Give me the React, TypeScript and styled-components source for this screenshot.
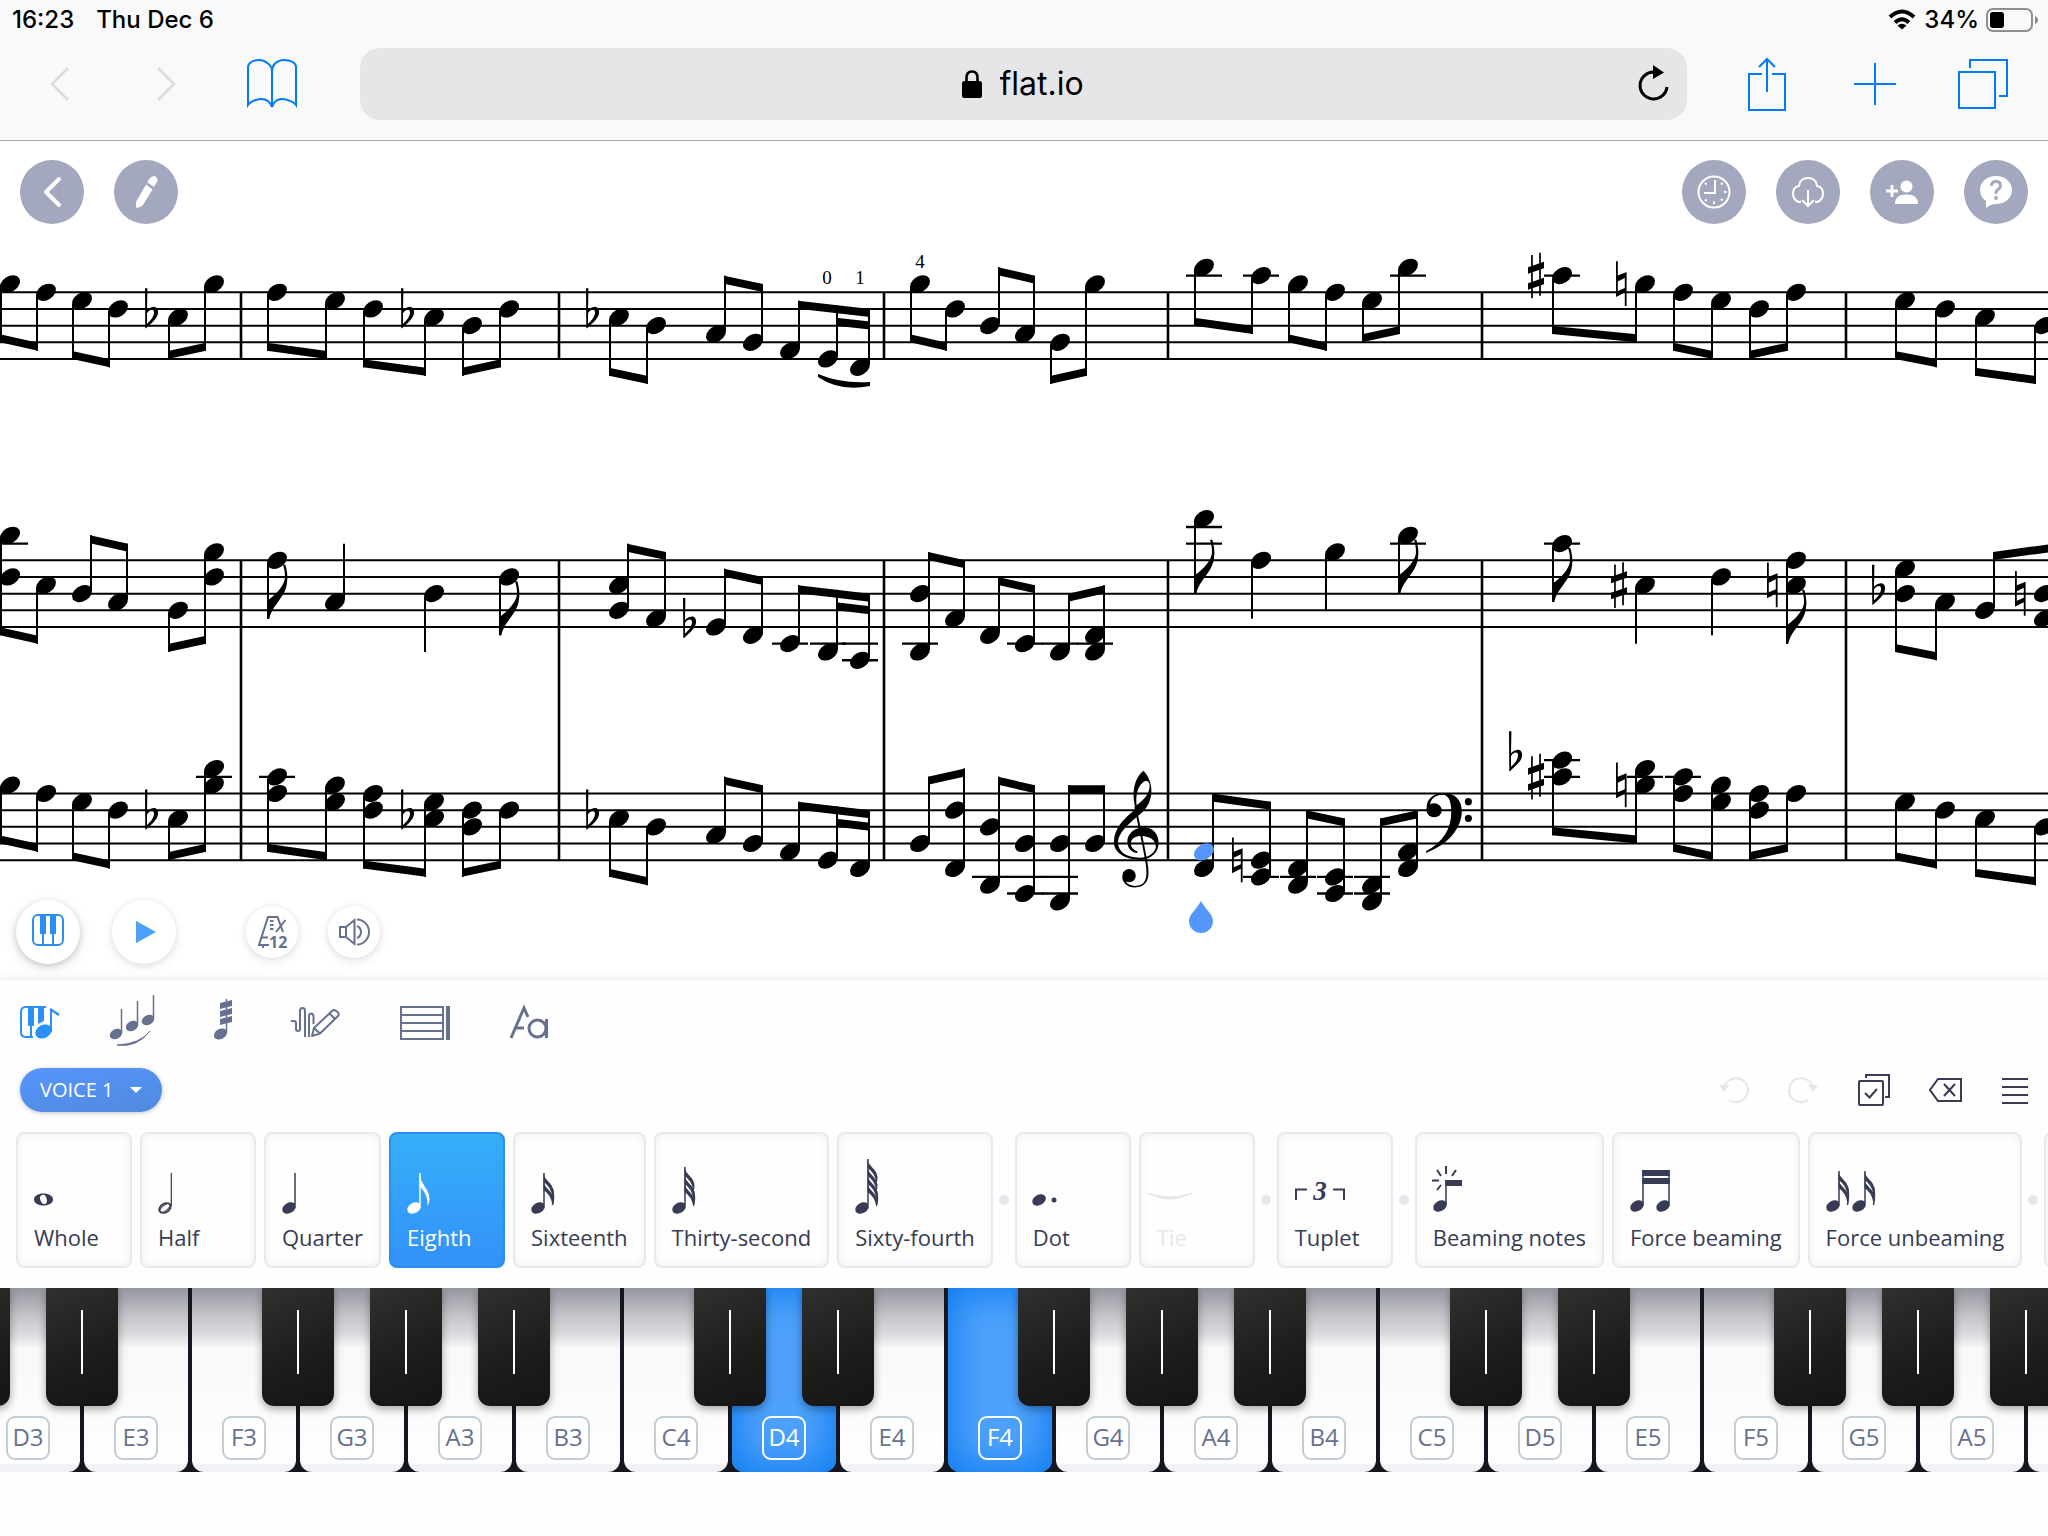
import React from "react";
import styled, { createGlobalStyle, css } from "styled-components";

const ink = "#373b53";
const slate = "#66718f";
const blue = "#2a90f5";

const GlobalStyle = createGlobalStyle`
  * { box-sizing: border-box; }
  body { margin: 0; background: #fefefe; overflow-x: hidden; }
  button, input { font: inherit; color: inherit; }
  button { border: 0; padding: 0; background: none; cursor: pointer; }
  svg { display: block; }
`;

const Page = styled.div`
  display: flex;
  flex-direction: column;
  min-height: 100vh;
  overflow: hidden;
  font-family: "Open Sans", "Noto Sans", sans-serif;
  color: ${ink};
`;

/* ---------- Browser chrome ---------- */

const Chrome = styled.header`
  background: #f9f9f9;
  border-bottom: 1px solid #a9a9ab;
  color: #000;
  font-family: Inter, "Liberation Sans", sans-serif;
`;

const StatusBar = styled.div`
  display: flex;
  align-items: center;
  justify-content: space-between;
  height: 40px;
  padding: 0 8px 0 12px;
  font-size: 24px;
  font-weight: 500;
  line-height: 40px;
`;

const StatusSide = styled.div<{ $gap: number }>`
  display: flex;
  align-items: center;
  gap: ${(p) => p.$gap}px;
`;

const NavBar = styled.nav`
  display: flex;
  align-items: center;
  height: 100px;
  padding: 0 11px 12px 7px;
`;

const NavButton = styled.button<{ $muted?: boolean; $wide?: boolean }>`
  display: flex;
  align-items: center;
  justify-content: center;
  width: ${(p) => (p.$wide ? 108 : 106)}px;
  height: 72px;
  color: ${(p) => (p.$muted ? "#dcdcde" : "#007aff")};
`;

const AddressBar = styled.div`
  position: relative;
  flex: 1;
  display: flex;
  align-items: center;
  justify-content: center;
  gap: 18px;
  height: 72px;
  margin: 0 26px 0 35px;
  border-radius: 20px;
  background: #e6e6e8;
`;

const AddressInput = styled.input`
  width: 86px;
  height: 44px;
  padding: 0;
  border: 0;
  outline: 0;
  background: transparent;
  font-size: 32px;
  line-height: 44px;
`;

const ReloadButton = styled.button`
  position: absolute;
  right: 16px;
  top: 16px;
`;

/* ---------- Score ---------- */

const ScoreArea = styled.main`
  position: relative;
  height: 839px;
  background: #fff;
`;

const ScoreSvg = styled.svg`
  width: 100%;
  height: 839px;
`;

const TopActions = styled.div`
  position: absolute;
  top: 19px;
  left: 20px;
  right: 20px;
  display: flex;
  justify-content: space-between;
`;

const ActionGroup = styled.div`
  display: flex;
  gap: 30px;
`;

const RoundButton = styled.button`
  display: flex;
  align-items: center;
  justify-content: center;
  width: 64px;
  height: 64px;
  border-radius: 50%;
  background: #a3a8be;
  color: #fff;
`;

const PlayerControls = styled.div`
  position: absolute;
  left: 16px;
  bottom: 16px;
  display: flex;
  align-items: center;
  gap: 32px;
`;

const SmallControls = styled.div`
  display: flex;
  gap: 30px;
  margin-left: 38px;
`;

const FloatButton = styled.button<{ $size: number; $raised?: boolean }>`
  display: flex;
  align-items: center;
  justify-content: center;
  width: ${(p) => p.$size}px;
  height: ${(p) => p.$size}px;
  border-radius: 50%;
  background: #fff;
  color: ${slate};
  box-shadow: ${(p) =>
    p.$raised
      ? "0 2px 6px rgba(55, 59, 83, 0.24), 0 4px 14px rgba(55, 59, 83, 0.1)"
      : "0 1px 6px rgba(55, 59, 83, 0.12), 0 4px 12px rgba(55, 59, 83, 0.07)"};
  svg { overflow: visible; }
`;

/* ---------- Tool panel ---------- */

const Panel = styled.section`
  position: relative;
  padding: 14px 0 20px;
  background: #fefefe;
  box-shadow: 0 -1px 6px rgba(55, 59, 83, 0.12);
`;

const TabRow = styled.div`
  display: flex;
  gap: 50px;
  padding-left: 20px;
`;

const Tab = styled.button<{ $active?: boolean }>`
  color: ${(p) => (p.$active ? blue : slate)};
`;

const VoiceRow = styled.div`
  display: flex;
  align-items: center;
  justify-content: space-between;
  margin-top: 18px;
  padding: 0 15px 0 20px;
`;

const VoiceButton = styled.button`
  display: flex;
  align-items: center;
  justify-content: space-between;
  width: 142px;
  height: 44px;
  padding: 0 20px;
  border-radius: 22px;
  background: linear-gradient(170deg, #5596fd, #5189dc);
  box-shadow: 0 1px 4px rgba(55, 59, 83, 0.3);
  color: #fff;
  font-size: 20px;
  line-height: 44px;
  white-space: nowrap;
`;

const EditActions = styled.div`
  display: flex;
  gap: 34px;
`;

const EditButton = styled.button`
  display: flex;
  justify-content: center;
  width: 36px;
  &:disabled { color: #e6e6ea; }
`;

const ToolRow = styled.div`
  display: flex;
  align-items: center;
  gap: 22px;
  margin-top: 20px;
  padding-left: 16px;
  overflow: hidden;
`;

const ToolGroup = styled.div`
  position: relative;
  flex: none;
  display: flex;
  gap: 8px;
  & + &::before {
    content: "";
    position: absolute;
    left: -16px;
    top: 63px;
    width: 10px;
    height: 10px;
    border-radius: 50%;
    background: #e6e7ec;
  }
`;

const ToolCard = styled.button<{ $active?: boolean }>`
  display: flex;
  flex-direction: column;
  justify-content: flex-end;
  align-items: flex-start;
  gap: 6px;
  flex: none;
  min-width: 116px;
  height: 136px;
  padding: 0 16px 14px;
  border: 2px solid #e6eaee;
  border-radius: 8px;
  background: #fefefe;
  box-shadow: inset 0 0 8px rgba(55, 59, 83, 0.07);
  font-size: 22px;
  line-height: 30px;
  white-space: nowrap;
  ${(p) =>
    p.$active &&
    css`
      border-color: #2a8ff4;
      background: linear-gradient(#35aff9, #3391f8);
      box-shadow: none;
      color: #fff;
    `}
  &:disabled { color: #e6e6ea; }
  svg { overflow: visible; }
`;

/* ---------- Piano ---------- */

const Piano = styled.section`
  display: flex;
  height: 184px;
  overflow: hidden;
  background: #151720;
`;

const KeySlot = styled.div`
  position: relative;
  flex: none;
  width: 108px;
  &:first-child { margin-left: -26px; }
`;

const WhiteKey = styled.button<{ $pressed?: boolean }>`
  display: flex;
  align-items: flex-end;
  justify-content: center;
  width: 104px;
  height: 184px;
  margin-left: 2px;
  padding-bottom: 12px;
  border-radius: 0 0 12px 12px;
  background: ${(p) =>
    p.$pressed
      ? "#4ea2fb"
      : "linear-gradient(#96989f 0, #c4c4ca 28px, #dadade 46px, #f8f8f8 60px, #fefefe 175px, #f2f2f6 177px)"};
  box-shadow: ${(p) => (p.$pressed ? "inset 0 0 36px 6px #0f7cf0" : "none")};
  color: ${(p) => (p.$pressed ? "#fff" : slate)};
`;

const KeyLabel = styled.span<{ $pressed?: boolean }>`
  width: 44px;
  height: 44px;
  border: 2px solid ${(p) => (p.$pressed ? "#fff" : "#c2cdd4")};
  border-radius: 9px;
  background: ${(p) => (p.$pressed ? "transparent" : "#fff")};
  font-size: 24px;
  line-height: 38px;
  text-align: center;
`;

const BlackKey = styled.button`
  position: absolute;
  z-index: 1;
  top: 0;
  left: -36px;
  display: flex;
  justify-content: center;
  width: 72px;
  height: 118px;
  padding-top: 22px;
  border-radius: 0 0 12px 12px;
  background: linear-gradient(155deg, #303030, #1c1c1b 60%, #151515);
  box-shadow: 0 3px 8px rgba(0, 0, 0, 0.35);
  &::after {
    content: "";
    width: 2px;
    height: 64px;
    background: #fff;
  }
`;

/* ---------- Score data ---------- */

// Pitches are counted in half staff spaces, downward from the top line.
type Accidental = "flat" | "sharp" | "natural";
type Note = {
  x: number;
  p: number[];
  ledger?: number[];
  acc?: [Accidental, number, number?][];
};
type Group = {
  notes: Note[];
  dir: "up" | "down";
  beam?: [number, number];
  end?: number;
  flag?: boolean;
  inner?: boolean;
};

const STEP = 25 / 3;
const STAFFS = [292.3, 560.3, 793.5];

const n = (
  x: number,
  p: number | number[],
  ledger?: number[],
  acc?: Note["acc"]
): Note => ({ x, p: Array.isArray(p) ? p : [p], ledger, acc });
const down = (a: number, b: number, ...notes: Note[]): Group => ({ notes, dir: "down", beam: [a, b] });
const up = (a: number, b: number, ...notes: Note[]): Group => ({ notes, dir: "up", beam: [a, b] });
const single = (dir: "up" | "down", end: number, note: Note, flag = false): Group => ({
  notes: [note], dir, end, flag,
});
const flat = (p: number, dx = -33): [Accidental, number, number] => ["flat", p, dx];
const sharp = (p: number): [Accidental, number, number] => ["sharp", p, -26];
const natural = (p: number): [Accidental, number, number] => ["natural", p, -29];

const SCORE: Group[][] = [
  [
    down(6, 7, n(10, -1), n(46, 0)),
    down(8, 9, n(82, 1), n(118, 2)),
    down(8, 7, n(178, 3, [], [flat(3)]), n(214, -1)),
    down(7, 8, n(277, 0), n(335, 1)),
    down(9, 10, n(373, 2), n(434, 3, [], [flat(3)])),
    down(10, 9, n(472, 4), n(509, 2)),
    down(10, 11, n(619, 3, [], [flat(3)]), n(656, 4)),
    up(-2, -1, n(716, 5), n(753, 6)),
    { ...up(1, 2, n(790, 7), n(828, 8), n(860, 9)), inner: true },
    down(6, 7, n(920, -1), n(955, 2)),
    up(-3, -2, n(990, 4), n(1025, 5)),
    down(11, 10, n(1060, 6), n(1095, -1)),
    down(4, 5, n(1204, -3, [-2]), n(1261, -2, [-2])),
    down(6, 7, n(1298, -1), n(1335, 0)),
    down(6, 5, n(1372, 1), n(1408, -3, [-2])),
    down(5, 6, n(1562, -2, [-2], [sharp(-2)]), n(1645, -1, [], [natural(-1)])),
    down(7, 8, n(1683, 0), n(1721, 1)),
    down(8, 7, n(1759, 2), n(1796, 0)),
    down(8, 9, n(1905, 1), n(1945, 2)),
    down(10, 11, n(1985, 3), n(2044, 4)),
  ],
  [
    down(9, 10, n(10, [-3, 2], [-2]), n(46, 3)),
    up(-3, -2, n(82, 4), n(118, 5)),
    down(11, 10, n(178, 6), n(214, [-1, 2])),
    single("down", 7, n(277, 0), true),
    single("up", -2, n(335, 5)),
    single("down", 11, n(434, 4)),
    single("down", 9, n(509, 2), true),
    up(-2, -1, n(619, [3, 6]), n(656, 7)),
    up(1, 2, n(716, 8, [], [flat(8)]), n(753, 9)),
    { ...up(3, 4, n(790, 10, [10]), n(828, 11, [10]), n(860, 12, [10, 12])), inner: true },
    up(-1, 0, n(920, [4, 11], [10]), n(955, 7)),
    up(2, 3, n(990, 9), n(1025, 10, [10])),
    up(4, 3, n(1060, 11, [10]), n(1095, [9, 11], [10])),
    single("down", 4, n(1204, -5, [-4, -2]), true),
    single("down", 7, n(1261, 0)),
    single("down", 6, n(1335, -1)),
    single("down", 4, n(1408, -3, [-2]), true),
    single("down", 5, n(1562, -2, [-2]), true),
    single("down", 10, n(1645, 3, [], [sharp(3)])),
    single("down", 9, n(1721, 2)),
    single("down", 10, n(1796, [0, 3], [], [natural(3)]), true),
    down(11, 12, n(1905, [1, 4], [], [flat(4)]), n(1945, 5)),
    up(-1, -2, n(1985, 6), n(2044, [4, 7], [], [natural(4)])),
  ],
  [
    down(6, 7, n(10, -1), n(46, 0)),
    down(8, 9, n(82, 1), n(118, 2)),
    down(8, 7, n(178, 3, [], [flat(3)]), n(214, [-3, -1], [-2])),
    down(7, 8, n(277, [-2, 0], [-2]), n(335, [-1, 1])),
    down(9, 10, n(373, [0, 2]), n(434, [1, 3], [], [flat(3)])),
    down(10, 9, n(472, [2, 4]), n(509, 2)),
    down(10, 11, n(619, 3, [], [flat(3)]), n(656, 4)),
    up(-2, -1, n(716, 5), n(753, 6)),
    { ...up(1, 2, n(790, 7), n(828, 8), n(860, 9)), inner: true },
    up(-2, -3, n(920, 6), n(955, [2, 9])),
    up(-2, -1, n(990, [4, 11], [10]), n(1025, [6, 12], [10, 12])),
    up(-1, -1, n(1060, [6, 13], [10, 12]), n(1095, 6)),
    up(0, 1, n(1204, [7, 9]), n(1261, [8, 10], [10], [natural(8)])),
    up(2, 3, n(1298, [9, 11], [10]), n(1335, [10, 12], [10, 12])),
    up(3, 2, n(1372, [11, 13], [10, 12]), n(1408, [7, 9])),
    down(5, 6, n(1562, [-4, -2], [-4, -2], [flat(-4, -53), sharp(-2)]), n(1645, [-3, -1], [-2], [natural(-1)])),
    down(7, 8, n(1683, [-2, 0], [-2]), n(1721, [-1, 1])),
    down(8, 7, n(1759, [0, 2]), n(1796, 0)),
    down(8, 9, n(1905, 1), n(1945, 2)),
    down(10, 11, n(1985, 3), n(2044, 4)),
  ],
];

const BARLINES = [241, 559, 884, 1168, 1482, 1846];
const isSelected = (staff: number, x: number, p: number) => staff === 2 && x === 1204 && p === 7;

const ACCIDENTALS: Record<Accidental, string> = {
  flat: "M0 -29H2.4L2 -7C5 -10 8 -10.6 9.6 -10.4C12.4 -10 13.5 -7 13 -4C12 2 6 6 1 11L0.3 11ZM2 -4V6.5C6 3 9 -1 9 -5C9 -9 4 -8 2 -4Z",
  sharp:
    "M-4.9 -20.7H-3.2V22.7H-4.9ZM3.2 -23H4.9V20H3.2ZM-8 -8.5L8 -14V-7.5L-8 -2ZM-8 7.5L8 2V8.5L-8 14Z",
  natural:
    "M0 -22.7H1.8V-8.5L10.6 -12V22H8.8V8.5L0 13ZM1.8 -2.5V7L8.8 4V-6Z",
};

function StaffGroup({ group, staff }: { group: Group; staff: number }) {
  const top = STAFFS[staff];
  const y = (p: number) => top + p * STEP;
  const side = group.dir === "down" ? -9 : 9;
  const first = group.notes[0].x + side;
  const last = group.notes[group.notes.length - 1].x + side;
  const beamAt = (x: number) => {
    if (!group.beam) return y(group.end ?? 0);
    const t = last === first ? 0 : (x - first) / (last - first);
    return y(group.beam[0] + (group.beam[1] - group.beam[0]) * t);
  };
  const thick = group.dir === "down" ? -8 : 8;
  const beamPath = (x0: number, x1: number, shift: number) => {
    const a = beamAt(x0) + shift;
    const b = beamAt(x1) + shift;
    return `M${x0 - 1} ${a}L${x1 + 1} ${b}V${b + thick}L${x0 - 1} ${a + thick}Z`;
  };
  return (
    <g>
      {group.notes.map((note) => {
        const sx = note.x + side;
        const start = group.dir === "down" ? Math.min(...note.p) : Math.max(...note.p);
        return (
          <g key={note.x}>
            {note.ledger?.map((p) => (
              <path key={p} d={`M${note.x - 18} ${y(p)}h36`} stroke="#000" strokeWidth="2.4" />
            ))}
            <path
              d={`M${sx} ${y(start) + (group.dir === "down" ? 3 : -3)}V${beamAt(sx)}`}
              stroke="#000"
              strokeWidth="2"
            />
            {note.p.map((p) => (
              <ellipse
                key={p}
                rx="10.8"
                ry="7.6"
                fill={isSelected(staff, note.x, p) ? "#5596fd" : "#000"}
                transform={`translate(${note.x} ${y(p)}) rotate(-32)`}
              />
            ))}
            {note.acc?.map(([kind, p, dx]) => (
              <path
                key={kind}
                fillRule={kind === "sharp" ? "nonzero" : "evenodd"}
                transform={`translate(${note.x + (dx ?? 0)} ${y(p)})`}
                d={ACCIDENTALS[kind]}
              />
            ))}
            {group.flag && (
              <path
                transform={`translate(${sx} ${beamAt(sx)})`}
                d="M-1 0V-18C4 -21 17 -32 17 -42C17 -47 16 -51 15 -54H17.4C19 -48 20 -42 19 -36C17.5 -21 4 -14 1.4 0Z"
              />
            )}
          </g>
        );
      })}
      {group.beam && <path d={beamPath(first, last, 0)} />}
      {group.inner && <path d={beamPath(group.notes[1].x + side, last, 12.5)} />}
    </g>
  );
}

function TrebleClef() {
  return (
    <g transform="translate(680 740) scale(0.4464 0.3333)">
      <path
        fillRule="evenodd"
        d="M1038 92C1023 108 1016 135 1016 165C1016 185 1019 198 1021 207C996 234 972 264 972 306C972 340 1000 360 1032 359C1057 357 1072 337 1072 308C1072 281 1058 262 1040 262C1018 262 1002 282 1002 305C1002 324 1012 338 1024 339L1025 334C1014 329 1009 318 1010 308C1011 296 1020 288 1034 288C1053 289 1066 300 1066 322C1062 343 1048 353 1030 353C1000 353 981 335 981 307C982 281 1000 257 1023 231C1042 211 1056 190 1056 152C1056 126 1048 105 1038 92ZM1023 196C1040 178 1053 160 1052 135C1051 121 1043 120 1036 128C1026 140 1020 165 1023 196Z"
      />
      <path
        d="M1020 200C1027 250 1038 310 1045 368C1051 412 1046 440 1019 440C1003 440 993 426 993 410"
        fill="none"
        stroke="#000"
        strokeWidth="4.5"
      />
      <ellipse cx="1006" cy="407" rx="15" ry="20" />
    </g>
  );
}

function BassClef() {
  return (
    <g transform="translate(1360 740) scale(0.4388 0.3333)">
      <ellipse cx="169" cy="211" rx="17.5" ry="21" />
      <path d="M152 208C150 180 165 159 191 159C220 160 232 184 232 214C232 265 200 315 150 339L151 333C190 305 208 266 208 215C208 184 202 164 188 164C170 164 158 180 160 200Z" />
      <ellipse cx="247" cy="185" rx="8" ry="11" />
      <ellipse cx="247" cy="235" rx="8" ry="11" />
    </g>
  );
}

function Score() {
  return (
    <ScoreSvg viewBox="0 141 2048 839" preserveAspectRatio="xMinYMin slice" role="img" aria-label="Score">
      {STAFFS.map((top) =>
        [0, 1, 2, 3, 4].map((i) => (
          <path key={`${top}-${i}`} d={`M0 ${top + i * 2 * STEP}H2048`} stroke="#000" strokeWidth="2" />
        ))
      )}
      {BARLINES.map((x) => (
        <path
          key={x}
          d={`M${x} ${STAFFS[0]}V${STAFFS[0] + 8 * STEP}M${x} ${STAFFS[1]}V${STAFFS[2] + 8 * STEP}`}
          stroke="#000"
          strokeWidth="2.6"
        />
      ))}
      {SCORE.map((groups, staff) => groups.map((g, i) => <StaffGroup key={`${staff}-${i}`} group={g} staff={staff} />))}
      <TrebleClef />
      <BassClef />
      <path d="M818 374Q842 384 870 382V386Q840 392 818 377Z" />
      <g fontFamily="Liberation Serif, serif" fontSize="19" textAnchor="middle">
        <text x="827" y="284">0</text>
        <text x="860" y="284">1</text>
        <text x="920" y="268">4</text>
      </g>
      <path d="M1201 901C1205 909 1213 914 1213 921A12 12 0 0 1 1189 921C1189 914 1197 909 1201 901Z" fill="#5596fd" />
    </ScoreSvg>
  );
}

/* ---------- Icons ---------- */

type IconProps = { w: number; h: number; sw?: number; children: React.ReactNode };
const Icon = ({ w, h, sw = 2, children }: IconProps) => (
  <svg width={w} height={h} viewBox={`0 0 ${w} ${h}`} fill="none" stroke="currentColor" strokeWidth={sw} aria-hidden="true">
    {children}
  </svg>
);

const Head = ({ x, y, rx = 7.2, ry = 5.2 }: { x: number; y: number; rx?: number; ry?: number }) => (
  <ellipse rx={rx} ry={ry} fill="currentColor" stroke="none" transform={`translate(${x} ${y}) rotate(-28)`} />
);

const Flags = ({ x, top, count }: { x: number; top: number; count: number }) => (
  <>
    {Array.from({ length: count }, (_, i) => (
      <path
        key={i}
        stroke="none"
        fill="currentColor"
        transform={`translate(${x} ${top + i * 8})`}
        d={
          count === 1
            ? "M0 0C1 12 10 16 10 26Q10 30 8 33Q9 22 0 13Z"
            : "M0 0C1 8 9 9 10 18Q10 22 9 24Q7 13 0 9Z"
        }
      />
    ))}
    {count > 1 && <path d={`M${x + 9} ${top + count * 8}Q${x + 11} ${top + count * 8 + 8} ${x + 9} 53`} strokeWidth="1.5" />}
  </>
);

const StemNote = ({ x = 0, top = 21, y = 56, flags = 0 }: { x?: number; top?: number; y?: number; flags?: number }) => (
  <>
    <Head x={x + 7} y={y} />
    <path d={`M${x + 13} ${y - 3}V${top}`} strokeWidth="1.5" />
    {flags > 0 && <Flags x={x + 12.5} top={top} count={flags} />}
  </>
);

const CardIcon = ({ w = 48, children }: { w?: number; children: React.ReactNode }) => (
  <Icon w={w} h={64}>{children}</Icon>
);

const ICONS: Record<string, React.ReactNode> = {
  Whole: (
    <path
      stroke="none"
      fill="currentColor"
      fillRule="evenodd"
      d="M9.5 41.5C15 41.5 19 44 19 47.5S15 53.5 9.5 53.5S0 51 0 47.5S4 41.5 9.5 41.5ZM8.5 43C5.5 43.5 5.5 46.5 7 49.5S11 52.5 12 51.5S13.5 47.5 12 45S10 42.8 8.5 43Z"
    />
  ),
  Half: (
    <>
      <ellipse rx="6.3" ry="4.3" transform="translate(7 56) rotate(-32)" strokeWidth="1.8" />
      <ellipse rx="6" ry="2.6" transform="translate(7 56) rotate(-38)" strokeWidth="1" />
      <path d="M13.3 54V21" strokeWidth="1.2" />
    </>
  ),
  Quarter: <StemNote />,
  Eighth: <StemNote flags={1} />,
  Sixteenth: <StemNote flags={2} />,
  "Thirty-second": <StemNote flags={3} top={15} />,
  "Sixty-fourth": <StemNote flags={4} top={7} />,
  Dot: (
    <>
      <Head x={6} y={48} />
      <circle cx="21" cy="48" r="2.5" fill="currentColor" stroke="none" />
    </>
  ),
  Tie: <path d="M-9 41Q13 53 35 41Q13 49 -9 41Z" fill="currentColor" strokeWidth="1" />,
  Tuplet: (
    <>
      <path d="M1 48V37.5H12M38 37.5H49V48" />
      <text x="25" y="48" textAnchor="middle" fontFamily="Liberation Serif, serif" fontSize="27" fontWeight="700" fontStyle="italic" fill="currentColor" stroke="none">3</text>
    </>
  ),
  "Beaming notes": (
    <>
      <Head x={7} y={54} />
      <path d="M13 52V28" strokeWidth="1.5" />
      <path d="M12.3 28H29V34H12.3Z" fill="currentColor" stroke="none" />
      <path d="M13 14V22M4 18L8 24M23 18L19 24M-1 28.5H6M8 33L4 38" />
    </>
  ),
  "Force beaming": (
    <>
      <Head x={7} y={54} />
      <Head x={33} y={54} />
      <path d="M13 52V18M39 52V18" strokeWidth="1.5" />
      <path d="M12.3 18H39.7V24H12.3ZM12.3 26H39.7V32H12.3Z" fill="currentColor" stroke="none" />
    </>
  ),
  "Force unbeaming": (
    <>
      <StemNote y={54} top={19} flags={2} />
      <StemNote x={26} y={54} top={19} flags={2} />
    </>
  ),
  More: null,
};

const TOOL_GROUPS = [
  ["Whole", "Half", "Quarter", "Eighth", "Sixteenth", "Thirty-second", "Sixty-fourth"],
  ["Dot", "Tie"],
  ["Tuplet"],
  ["Beaming notes", "Force beaming", "Force unbeaming"],
  ["More"],
];

const OCTAVE = ["C", "D", "E", "F", "G", "A", "B"];
const LAST_LABELLED = 18;
const KEYS = Array.from({ length: 20 }, (_, i) => {
  const index = i + 1;
  const name = OCTAVE[index % 7];
  return {
    name: `${name}${3 + Math.floor(index / 7)}`,
    black: name !== "C" && name !== "F",
    labelled: i <= LAST_LABELLED,
  };
});
const PRESSED = ["D4", "F4"];

const TABS: { label: string; w: number; art: React.ReactNode }[] = [
  {
    label: "Notes",
    w: 40,
    art: (
      <>
        <path d="M26 13H6Q1 13 1 18V38Q1 43 6 43H13M11 31V43M31 38V15" />
        <path d="M8 12H14V32H8ZM18 12H24V27L18 30Z" fill="currentColor" stroke="none" />
        <path d="M30 15L39 21" strokeWidth="2.5" />
        <Head x={23.5} y={37.5} rx={8.6} ry={6.6} />
      </>
    ),
  },
  {
    label: "Articulations",
    w: 48,
    art: (
      <>
        <Head x={6} y={40} rx={6.6} ry={4.8} />
        <Head x={22} y={32} rx={6.6} ry={4.8} />
        <Head x={38} y={26} rx={6.6} ry={4.8} />
        <path d="M11.5 38V15M27.5 30V7M43.5 24V1" strokeWidth="1.5" />
        <path d="M7 51Q27 54 40 37Q30 50 7 51Z" fill="currentColor" strokeWidth="1" />
      </>
    ),
  },
  {
    label: "Ornaments",
    w: 32,
    art: (
      <>
        <Head x={12.5} y={40} rx={7} ry={5} />
        <path d="M18.5 38V5" strokeWidth="1.5" />
        <path d="M12 9L24 6V12L12 15ZM12 17L24 14V20L12 23ZM12 25L24 22V28L12 31Z" fill="currentColor" stroke="none" />
      </>
    ),
  },
  {
    label: "Dynamics",
    w: 56,
    art: (
      <>
        <path d="M1 27H4Q6 27 6 29V35Q6 37 8 37T10 35V17Q10 14 12.5 14T15 17V43M19 43V22Q19 19.5 21 19.5T23.5 22V30" />
        <path d="M22 42L24 34L42 17Q44 15 47 17.5T48 22L30 39.5ZM39.5 19.5L45 25M24 34L30 39.5" strokeLinejoin="round" />
      </>
    ),
  },
  {
    label: "Measure",
    w: 58,
    art: (
      <>
        <path d="M5 13H47V45H5ZM5 21H47M5 29H47M5 37H47" />
        <path d="M52 12V46" strokeWidth="4" />
      </>
    ),
  },
  {
    label: "Text",
    w: 50,
    art: (
      <>
        <path d="M7 44L20 14L24 23M12 34H20" strokeWidth="3" />
        <circle cx="33.5" cy="34.5" r="8.5" strokeWidth="3" />
        <path d="M42.500 25V44" strokeWidth="3" />
      </>
    ),
  },
];

export default function App() {
  return (
    <Page>
      <GlobalStyle />
      <Chrome>
        <StatusBar>
          <StatusSide $gap={22}>
            <span>16:23</span>
            <span>Thu Dec 6</span>
          </StatusSide>
          <StatusSide $gap={7}>
            <Icon w={30} h={22} sw={4}>
              <path d="M3 8Q15 -3 27 8M8 13.5Q15 7 22 13.5" />
              <path d="M15 20.5L10.5 16.5Q15 13 19.5 16.5Z" fill="currentColor" stroke="none" />
            </Icon>
            <span>34%</span>
            <Icon w={54} h={24}>
              <rect x="1" y="1" width="45" height="22" rx="6" stroke="#8e8e90" />
              <rect x="4" y="4" width="14" height="16" rx="3" fill="#000" stroke="none" />
              <path d="M49 8Q52 9 52 12T49 16Z" fill="#8e8e90" stroke="none" />
            </Icon>
          </StatusSide>
        </StatusBar>
        <NavBar>
          <NavButton $muted aria-label="Back">
            <Icon w={22} h={36} sw={2.6}><path d="M19 2L3 18L19 34" /></Icon>
          </NavButton>
          <NavButton $muted aria-label="Forward">
            <Icon w={22} h={36} sw={2.6}><path d="M3 2L19 18L3 34" /></Icon>
          </NavButton>
          <NavButton aria-label="Bookmarks">
            <Icon w={52} h={50}>
              <path d="M26 48C24 42 20 40 15 40S4 43 2 46V8C2 4 7 1 13 1S26 6 26 12V48C28 42 31 40 36 40S48 43 50 46V8C50 4 45 1 38 1S26 6 26 12" />
            </Icon>
          </NavButton>
          <AddressBar>
            <Icon w={20} h={28}>
              <rect x="0" y="11" width="20" height="17" rx="2.5" fill="#000" stroke="none" />
              <path d="M4.5 12V8Q4.5 1.5 10 1.5T15.5 8V12" strokeWidth="2.6" />
            </Icon>
            <AddressInput aria-label="Address" defaultValue="flat.io" />
            <ReloadButton aria-label="Reload">
              <Icon w={36} h={40} sw={3}>
                <path d="M32 23A13.5 13.5 0 1 1 19 8" />
                <path d="M18 1L29 8.5L18 15Z" fill="#000" stroke="none" />
              </Icon>
            </ReloadButton>
          </AddressBar>
          <NavButton $wide aria-label="Share">
            <Icon w={40} h={54}>
              <path d="M15 17H2V53H38V17H25M20 35V2M12 10L20 2L28 10" />
            </Icon>
          </NavButton>
          <NavButton $wide aria-label="New tab">
            <Icon w={42} h={42}><path d="M21 0V42M0 21H42" /></Icon>
          </NavButton>
          <NavButton $wide aria-label="Tabs">
            <Icon w={50} h={50}>
              <path d="M1 13H37V49H1ZM12 9V1H49V37H41" />
            </Icon>
          </NavButton>
        </NavBar>
      </Chrome>

      <ScoreArea>
        <Score />
        <TopActions>
          <ActionGroup>
            <RoundButton aria-label="Back to scores">
              <Icon w={32} h={32} sw={4}><path d="M23 3L10 16L23 29" strokeLinecap="round" strokeLinejoin="round" /></Icon>
            </RoundButton>
            <RoundButton aria-label="Edit score">
              <Icon w={32} h={32}>
                <path d="M16 8.5L22.5 13.5L13 29Q10 32 6.500 32Q5 28 6.500 25Z" fill="currentColor" stroke="none" />
                <path d="M17.5 6.5Q20 0 24 0Q28 1 27.5 5L24 11Z" fill="currentColor" stroke="none" />
              </Icon>
            </RoundButton>
          </ActionGroup>
          <ActionGroup>
            <RoundButton aria-label="History">
              <Icon w={34} h={34}>
                <circle cx="17" cy="17" r="15.5" />
                <path d="M18 5V18H7" />
                <path d="M17 26.5V29M27 17H29.5M24 9.5L25.5 8M24 24L25.5 25.5M9.5 24.5L8 26M9.5 9.5L8 8" />
              </Icon>
            </RoundButton>
            <RoundButton aria-label="Export">
              <Icon w={34} h={34}>
                <path d="M10 27H8Q2 25 2 18.5T8 11Q9 3 17 3T26 11Q32 12 32 18.5T26 27H24" />
                <path d="M17 15V31M11 25L17 31L23 25" />
              </Icon>
            </RoundButton>
            <RoundButton aria-label="Share score">
              <Icon w={34} h={34}>
                <circle cx="21.5" cy="11.5" r="6" fill="currentColor" stroke="none" />
                <path d="M10 29Q10 19.5 21.5 19.5T33 29Z" fill="currentColor" stroke="none" />
                <path d="M1 16H13M7 10V22" strokeWidth="2.8" />
              </Icon>
            </RoundButton>
            <RoundButton aria-label="Help">
              <Icon w={34} h={34}>
                <path d="M17 1C26 1 33 7 33 15S26 29 17 29Q12 29 7 33V26Q1 22 1 15C1 7 8 1 17 1Z" fill="currentColor" stroke="none" />
                <path d="M12.5 11Q12.5 6.5 17 6.5T21.5 10.5Q21.5 13 19 14.5T17 19" stroke="#a3a8be" strokeWidth="2.8" />
                <circle cx="17" cy="23" r="2" fill="#a3a8be" stroke="none" />
              </Icon>
            </RoundButton>
          </ActionGroup>
        </TopActions>
        <PlayerControls>
          <FloatButton $size={64} $raised aria-label="Piano keyboard">
            <Icon w={32} h={36}>
              <g stroke={blue}>
                <rect x="1" y="1" width="30" height="30" rx="5" />
                <path d="M11 20V31M21 20V31" />
                <path d="M8 1H14V20H8ZM18 1H24V20H18Z" fill={blue} stroke="none" />
              </g>
            </Icon>
          </FloatButton>
          <FloatButton $size={64} aria-label="Play">
            <Icon w={20} h={22}><path d="M2 1Q2 -1 4 1L22 11L4 21Q2 23 2 21Z" fill="#4da1fb" stroke="none" /></Icon>
          </FloatButton>
          <SmallControls>
            <FloatButton $size={52} aria-label="Metronome">
              <Icon w={28} h={32}>
                <path d="M25 16L19.5 1H10L1 29H11M4 21.5H10M27.5 4L18 16M5 29V32" />
                <path d="M12 5H15.5M12 9H15.5M12 13H15.5" />
                <text x="11" y="32" fontFamily="Open Sans, sans-serif" fontSize="16" fontWeight="700" fill="currentColor" stroke="none">12</text>
              </Icon>
            </FloatButton>
            <FloatButton $size={52} aria-label="Volume">
              <Icon w={30} h={28}>
                <path d="M1 9H7V19H1ZM7 9L15.5 2V26L7 19M18 8A6.5 6.5 0 0 1 18 20M18 1.5A12 12.5 0 0 1 18 26.5" />
              </Icon>
            </FloatButton>
          </SmallControls>
        </PlayerControls>
      </ScoreArea>

      <Panel>
        <TabRow>
          {TABS.map((tab, i) => (
            <Tab key={tab.label} $active={i === 0} aria-label={tab.label}>
              <Icon w={tab.w} h={56}>{tab.art}</Icon>
            </Tab>
          ))}
        </TabRow>
        <VoiceRow>
          <VoiceButton>
            <span>VOICE 1</span>
            <Icon w={12} h={6}><path d="M0 0H12L6 6Z" fill="currentColor" stroke="none" /></Icon>
          </VoiceButton>
          <EditActions>
            <EditButton disabled aria-label="Undo">
              <Icon w={34} h={34}>
                <path d="M6 16A12 12 0 1 1 11 27" />
                <path d="M1 12H11L6 19Z" fill="currentColor" stroke="none" />
              </Icon>
            </EditButton>
            <EditButton disabled aria-label="Redo">
              <Icon w={34} h={34}>
                <path d="M25 16A12 12 0 1 0 20 27" />
                <path d="M30 12H20L25 19Z" fill="currentColor" stroke="none" />
              </Icon>
            </EditButton>
            <EditButton aria-label="Select">
              <Icon w={34} h={34}>
                <rect x="1" y="8" width="24" height="24" rx="1" />
                <path d="M8 5V2H31V24H27M7 20L11.5 24.5L19 16" />
              </Icon>
            </EditButton>
            <EditButton aria-label="Delete">
              <Icon w={34} h={34}>
                <path d="M10 6H33V28H10L2 17ZM16 11L27 23M27 11L16 23" />
              </Icon>
            </EditButton>
            <EditButton aria-label="Menu">
              <Icon w={26} h={34}><path d="M0 6H26M0 14H26M0 22H26M0 30H26" /></Icon>
            </EditButton>
          </EditActions>
        </VoiceRow>
        <ToolRow>
          {TOOL_GROUPS.map((group) => (
            <ToolGroup key={group[0]}>
              {group.map((name) => (
                <ToolCard key={name} $active={name === "Eighth"} disabled={name === "Tie"} aria-label={name}>
                  {name !== "More" && (
                    <>
                      <CardIcon>{ICONS[name]}</CardIcon>
                      <span>{name}</span>
                    </>
                  )}
                </ToolCard>
              ))}
            </ToolGroup>
          ))}
        </ToolRow>
      </Panel>

      <Piano aria-label="Piano">
        {KEYS.map((key) => {
          const pressed = PRESSED.includes(key.name);
          return (
            <KeySlot key={key.name}>
              <WhiteKey $pressed={pressed} aria-label={key.name}>
                {key.labelled && <KeyLabel $pressed={pressed}>{key.name}</KeyLabel>}
              </WhiteKey>
              {key.black && <BlackKey aria-label={`${key.name} flat`} />}
            </KeySlot>
          );
        })}
      </Piano>
    </Page>
  );
}
